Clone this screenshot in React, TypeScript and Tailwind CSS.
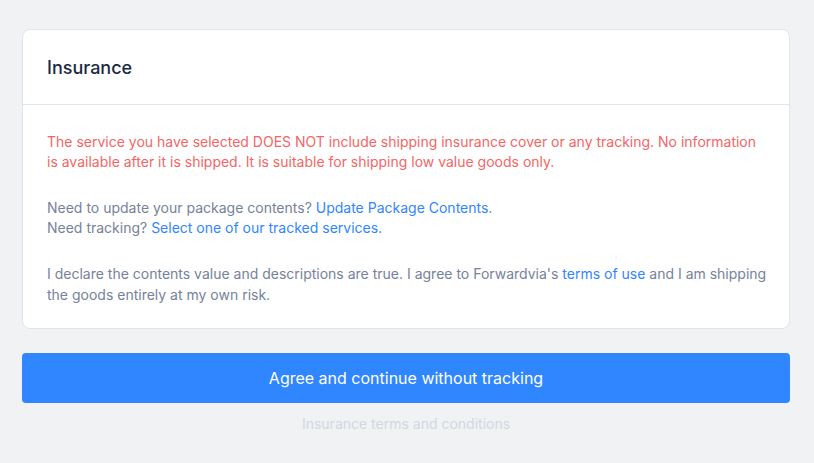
export default function App() {
  return (
    <div
      className="min-h-[463px] bg-[#f1f2f4] pt-[29px]"
      style={{ fontFamily: "Inter, 'Noto Sans', sans-serif" }}
    >
      <div className="ml-[22px] w-[768px]">
        {/* Card */}
        <div className="rounded-lg border border-[#e1e4e8] bg-white">
          <div className="border-b border-[#e1e4e8] px-6 pt-6 pb-[22px]">
            <h1 className="text-lg leading-7 font-medium text-[#1a2a44]">Insurance</h1>
          </div>
          <div className="pl-6 pr-4 pt-[27px] pb-[23px] text-sm leading-5">
            <p className="text-[#f56565]">
              The service you have selected DOES NOT include shipping insurance cover or any tracking. No information
              <br />
              is available after it is shipped. It is suitable for shipping low value goods only.
            </p>
            <p className="mt-[26px] text-[#76829a]">
              Need to update your package contents?{' '}
              <a className="text-[#2f86ff]">Update Package Contents</a>.
              <br />
              Need tracking? <a className="text-[#2f86ff]">Select one of our tracked services.</a>
            </p>
            <p className="mt-[25px] leading-[21px] text-[#76829a]">
              I declare the contents value and descriptions are true. I agree to Forwardvia's{' '}
              <a className="text-[#2f86ff]">terms of use</a> and I am shipping
              <br />
              the goods entirely at my own risk.
            </p>
          </div>
        </div>

        {/* Action */}
        <button className="mt-6 flex h-[50px] w-full items-center justify-center rounded bg-[#2f86ff] text-base text-white">
          Agree and continue without tracking
        </button>
        <div className="mt-[11px] text-center text-sm leading-5 text-[#d0d8e3]">
          Insurance terms and conditions
        </div>
      </div>
    </div>
  );
}
